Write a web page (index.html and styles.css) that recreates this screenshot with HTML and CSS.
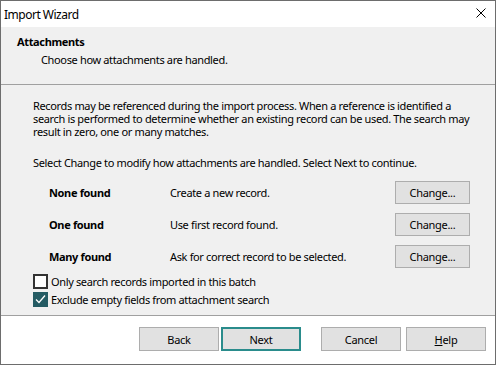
FILE: index.html
```html
<!DOCTYPE html>
<html lang="en">

<head>
    <meta charset="UTF-8">
    <meta name="viewport" content="width=device-width, initial-scale=1.0">
    <title>Import Wizard</title>
    <link rel="stylesheet" href="styles.css">
</head>

<body>
    <div class="window">
        <div class="titlebar">
            <span class="title">Import Wizard</span>
            <svg class="close" width="10" height="10" viewBox="0 0 10 10">
                <path d="M0.5 0.5 L9.5 9.5 M9.5 0.5 L0.5 9.5" stroke="#000" stroke-width="1" fill="none" />
            </svg>
        </div>

        <div class="header">
            <div class="header-title">Attachments</div>
            <div class="header-sub">Choose how attachments are handled.</div>
        </div>

        <div class="content">
            <p class="intro">Records may be referenced during the import process. When a reference is identified a<br>
                search is performed to determine whether an existing record can be used. The search may<br>
                result in zero, one or many matches.</p>
            <p class="hint">Select Change to modify how attachments are handled. Select Next to continue.</p>

            <div class="rules">
                <div class="rule">
                    <span class="rule-name">None found</span>
                    <span class="rule-desc">Create a new record.</span>
                    <button class="btn btn-change">Change...</button>
                </div>
                <div class="rule">
                    <span class="rule-name">One found</span>
                    <span class="rule-desc">Use first record found.</span>
                    <button class="btn btn-change">Change...</button>
                </div>
                <div class="rule">
                    <span class="rule-name">Many found</span>
                    <span class="rule-desc">Ask for correct record to be selected.</span>
                    <button class="btn btn-change">Change...</button>
                </div>
            </div>

            <div class="options">
                <label class="option">
                    <span class="box"></span>
                    Only search records imported in this batch
                </label>
                <label class="option">
                    <span class="box checked">
                        <svg width="11" height="11" viewBox="0 0 11 11">
                            <path d="M1 5.5 L4 8.5 L10 1.5" stroke="#fff" stroke-width="1.3" fill="none" />
                        </svg>
                    </span>
                    Exclude empty fields from attachment search
                </label>
            </div>
        </div>

        <div class="footer">
            <button class="btn">Back</button>
            <button class="btn btn-default">Next</button>
            <button class="btn btn-cancel">Cancel</button>
            <button class="btn"><u>H</u>elp</button>
        </div>
    </div>
</body>

</html>
```

FILE: styles.css
```css
body {
    margin: 0;
    font-family: 'Noto Sans', 'Open Sans', sans-serif;
    font-size: 11px;
    letter-spacing: -0.35px;
    color: #000;
    background: #fff;
}

.window {
    width: 496px;
    height: 365px;
    box-sizing: border-box;
    border: 1px solid #6d6d6d;
    display: flex;
    flex-direction: column;
    background: #fff;
}

/* 标题栏 */
.titlebar {
    height: 26px;
    display: flex;
    align-items: center;
    justify-content: space-between;
    padding: 0 9px 0 3px;
    background: #fff;
}

.title {
    font-size: 12px;
    letter-spacing: -0.5px;
}

.close {
    margin-top: -3px;
}

/* 页眉 */
.header {
    height: 58px;
    box-sizing: border-box;
    padding: 6px 16px 0;
    background: #f0f0f0;
    border-bottom: 1px solid #a0a0a0;
    line-height: 18px;
}

.header-title {
    font-weight: bold;
}

.header-sub {
    padding-left: 24px;
}

/* 内容区 */
.content {
    flex: 1;
    background: #f0f0f0;
    border-bottom: 1px solid #a0a0a0;
    padding: 14px 0 0 32px;
}

.content p {
    margin: 0;
    line-height: 13px;
    white-space: nowrap;
}

.hint {
    margin-top: 18px !important;
}

.rules {
    display: flex;
    flex-direction: column;
    gap: 9px;
    margin-top: 12px;
}

.rule {
    display: flex;
    align-items: center;
    height: 23px;
    padding-left: 16px;
}

.rule-name {
    width: 121px;
    font-weight: bold;
}

.rule-desc {
    flex: 1;
}

.options {
    display: flex;
    flex-direction: column;
    gap: 3px;
    margin-top: 6px;
}

.option {
    display: flex;
    align-items: center;
    gap: 3px;
    height: 15px;
}

.box {
    width: 15px;
    height: 15px;
    box-sizing: border-box;
    border: 2px solid #333;
    background: #fff;
    display: flex;
    align-items: center;
    justify-content: center;
}

.box.checked {
    border: none;
    background: #245b63;
}

/* 按钮 */
.btn {
    font-family: inherit;
    font-size: 11px;
    letter-spacing: -0.3px;
    color: #000;
    width: 80px;
    height: 24px;
    padding: 0;
    background: #e1e1e1;
    border: 1px solid #adadad;
}

.btn-change {
    width: 75px;
    height: 23px;
    margin-right: 25px;
}

.btn-default {
    border: 2px solid #2a8c8c;
}

.footer {
    height: 48px;
    box-sizing: border-box;
    padding: 11px 9px 0 0;
    display: flex;
    justify-content: flex-end;
    align-items: flex-start;
    gap: 2px;
}

.btn-cancel {
    margin-left: 18px;
    margin-right: 3px;
}
```
